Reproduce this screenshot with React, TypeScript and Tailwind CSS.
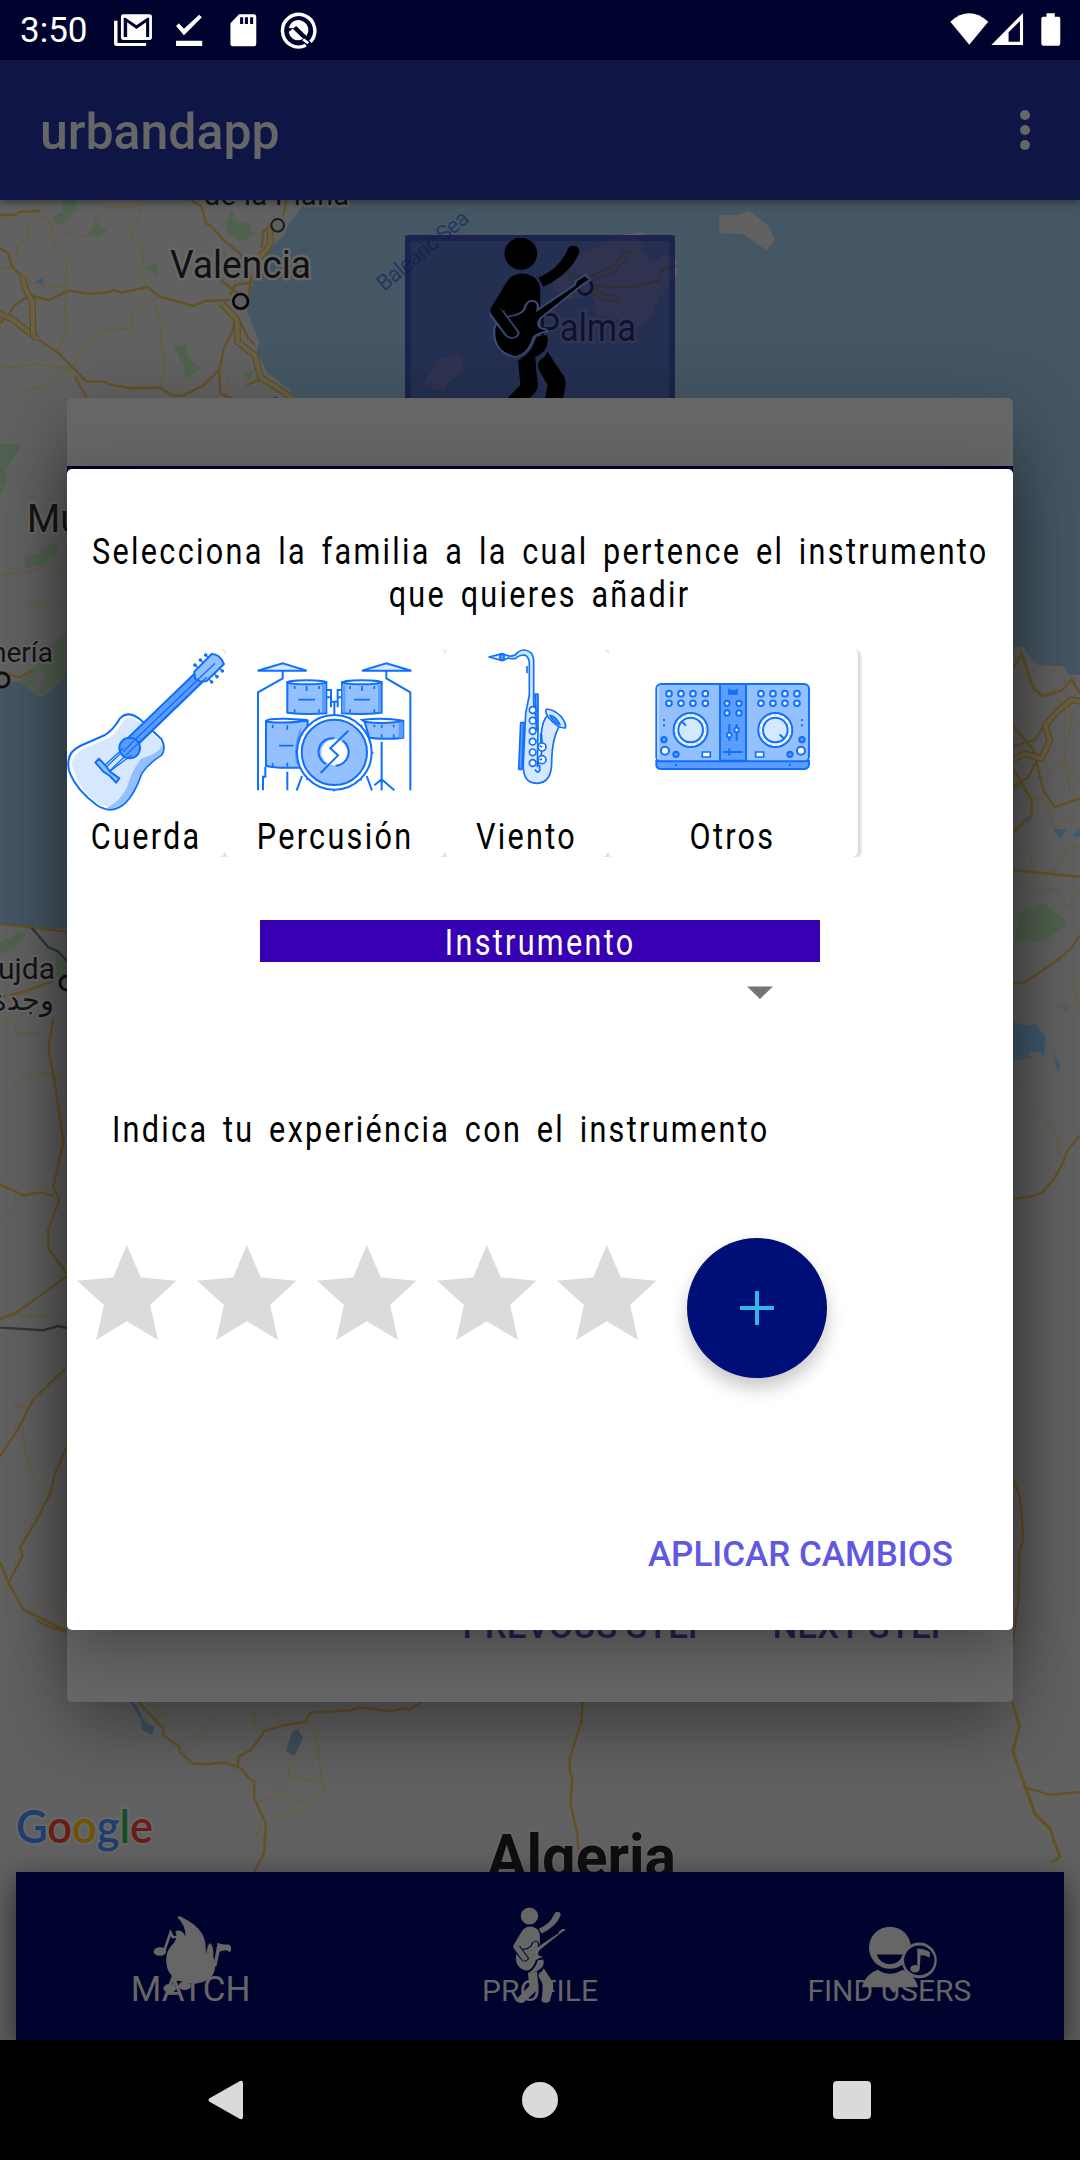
import React from "react";

const BLUE = "#0f6fff";
const PALE = "#d6e8ff";
const LIGHT = "#94c0ff";
const MID = "#5c9dff";

function Guitarist({ gap }: { gap: string }) {
  return (
    <g transform="scale(.4529 .3333)">
      <ellipse cx="333" cy="176" rx="36" ry="48" />
      <path d="M372 248 L383 275 Q445 235 462 172 Q463 154 450 152 Q439 152 436 165 Q418 222 372 248Z" />
      <path d="M327 495 L365 487 Q366 530 371 570 Q370 590 355 605 L312 660 Q290 675 275 650 L332 570Z" />
      <path d="M392 470 L430 548 Q434 570 428 600 L417 655 Q400 675 382 652 L392 570 L371 518 Q369 495 385 487Z" />
      <path d="M310 247 Q335 225 360 245 Q376 258 376 290 V350 L350 385 L300 370 L297 345 L275 380 Q262 360 267 340 L300 265Z" />
      <path d="M368 425 Q355 480 330 492 Q375 495 390 455 Q395 435 390 420Z" />
      <path
        d="M275 395 Q268 470 320 486 Q350 480 362 425 Q375 412 390 410 Q392 402 378 400 Q365 388 378 368 L470 268 L486 255 L476 240 L455 258 L452 270 L370 345 Q374 320 358 317 Q345 318 340 345 Q330 360 310 363 Q285 375 275 395Z"
        stroke={gap}
        strokeWidth="5"
      />
      <path d="M281 358 L313 414" stroke={gap} strokeWidth="34" strokeLinecap="round" />
      <path d="M279 352 L313 414" stroke="currentColor" strokeWidth="25" strokeLinecap="round" />
    </g>
  );
}

const minor = { fill: "none", stroke: "#6b5b2f", strokeWidth: 1, vectorEffect: "non-scaling-stroke" as const };
const road = { fill: "none", stroke: "#655224", strokeWidth: 2.4, vectorEffect: "non-scaling-stroke" as const };
const casing = { fill: "none", stroke: "#5d4b1e", strokeWidth: 6.5, vectorEffect: "non-scaling-stroke" as const };
const core = { fill: "none", stroke: "#696042", strokeWidth: 4.5, vectorEffect: "non-scaling-stroke" as const };

function Map() {
  const motorways = [
    "M-5 355 L40 375 L95 418 L112 432",
    "M68 245 L75 280 L97 320 L100 425",
    "M665 325 L712 375 L713 440 L765 482 L782 548 L850 590 L875 612",
    "M775 190 L800 165 L812 140 L808 100",
  ];
  const easternMotorways = ["M0 392 L75 380 L125 385 L150 365 L135 350 L170 335 L215 322 L245 324"];
  return (
    <svg viewBox="0 200 1080 1672" className="block h-[1672px] w-[1080px]" fontFamily="Roboto, sans-serif">
      <rect y="200" width="1080" height="1672" fill="#616161" />
      <g transform="translate(0 195) scale(.3333)">
        <path d="M905 10 L905 40 L870 80 L850 125 L810 160 L770 240 L745 300 L742 350 L778 440 L770 470 L800 530 L870 585 L905 640 H3300 V10Z" fill="#455764" />
        <g fill="#51614f">
          <path d="M190 15 H228 L232 45 L190 85 L172 88 L158 68 L185 50Z" />
          <path d="M288 78 L320 108 L298 125 L265 117Z" />
          <path d="M695 45 L710 82 L756 83 L750 105 L772 118 L718 140 L680 110 L678 85Z" />
          <path d="M437 215 L473 205 L470 242Z" />
          <path d="M520 453 L557 447 L567 487 L601 520 L557 555 L552 510Z" />
          <path d="M723 540 L763 525 L745 558Z" />
          <path d="M668 160 L680 178 L672 190Z" />
        </g>
        <path d="M105 262 L125 249 L134 273Z" fill="#40596c" />
        <path {...minor} d="M95 20 L120 65 L150 75 L165 110 L220 115 L240 125 L270 118 L290 60 L320 38 L400 35 L430 30 L420 15 M120 68 L85 90 L88 130 L50 150 L48 200 L30 225 M150 75 L165 150 L200 205 L198 295 M425 42 L390 125 L420 150 L432 190 L420 240 L445 278 M0 222 L35 220 M75 250 L115 277 L200 277 M470 310 L395 350 L398 400 L325 403 L262 435 L218 515 M198 295 L195 350 L200 405 L172 470 M0 510 L30 518 L110 507 L218 523 M218 523 L125 575 L95 580 L30 610 M468 325 L480 380 L484 460 L493 490 L490 530 L478 575 M655 520 L680 545 L685 575 L665 600" />
        <path {...road} d="M0 60 L45 60 L60 50 L122 48 M0 160 L25 175 L35 215 L68 245 M0 385 L25 360 L45 330 L88 302 L145 315 L205 287 L275 297 L330 290 L340 285 L365 292 L443 277 L480 305 L580 333 L615 318 L690 315 M112 432 L170 470 L225 525 L260 560 L312 560 L330 568 L392 580 L480 578 L515 600 L548 602 L612 570 L658 525 L672 460 L697 410 L705 375 M225 545 L262 612 M570 12 L605 35 L618 85 L635 95 L665 130 L720 175 L757 260 L735 265 L705 270 L690 300 M655 250 L720 300 M752 240 L748 300 M785 160 L790 110 L812 90 M658 530 L660 595 L695 610 M850 60 L860 15 M720 380 L745 430 L765 450 M740 570 L785 550" />
        {motorways.map((d) => (
          <React.Fragment key={d}>
            <path {...casing} d={d} />
            <path {...core} d={d} />
          </React.Fragment>
        ))}
        <circle cx="833" cy="91" r="19" fill="#5f5f5f" stroke="#1b1b1b" strokeWidth="6" />
        <circle cx="722" cy="319" r="22" fill="#5f5f5f" stroke="#050505" strokeWidth="8" />
        <path d="M822 608 L830 605 L830 612Z" fill="#222" />
      </g>
      <g stroke="#686868" strokeWidth="5" paintOrder="stroke" strokeLinejoin="round" fill="#111">
        <text x="204" y="205" fontSize="28.5" textLength="145" stroke="#5d6163">de la Plana</text>
        <text x="170" y="278" fontSize="39" textLength="141" lengthAdjust="spacingAndGlyphs">Valencia</text>
      </g>
      <text transform="translate(384 292) rotate(-39.5)" fontSize="22" textLength="112" fill="#25375f">Balearic Sea</text>
      <g transform="translate(370 195) scale(.4529 .3333)">
        <path fill="#616161" d="M771 60 H814 L838 48 L880 92 L894 135 L875 165 L823 117 L771 115Z" />
        <path fill="#616161" d="M445 195 L555 120 L608 111 L592 130 L605 155 L597 162 L622 203 L652 178 L677 195 V237 L657 280 L640 305 L620 365 L590 405 L545 368 L500 360 L495 300 L440 315 L410 290 L400 255Z" />
        <path fill="#616161" d="M150 493 L195 477 L205 483 V530 L175 560 L162 592 L117 570Z" />
        <path fill="#51614f" d="M430 220 L470 245 L440 260Z" />
        <path {...road} d="M493 273 L580 277 L602 270 L637 257 L640 235 L655 218 L678 213" />
        <path {...casing} d="M490 250 L540 220 L568 175 M495 290 L515 305 L545 312" strokeLinecap="round" />
        <path {...core} d="M490 250 L540 220 L568 175 M495 290 L515 305 L545 312" strokeLinecap="round" />
      </g>
      <ellipse cx="585" cy="287" rx="7" ry="7.5" fill="none" stroke="#111" strokeWidth="3" />
      <text x="538" y="341" fontSize="38" textLength="98" lengthAdjust="spacingAndGlyphs" stroke="#686868" strokeWidth="5" paintOrder="stroke" fill="#111">Palma</text>
      <rect x="405" y="235" width="270" height="190" rx="5" fill="#0f1444" fillOpacity=".6" />
      <path d="M408 425 V238 H672 V425" fill="none" stroke="#141a4c" strokeOpacity=".5" strokeWidth="6" />
      <g transform="translate(370 195)" color="#000" fill="#000">
        <Guitarist gap="#3a4a72" />
      </g>

      <g transform="translate(0 400) scale(.3333 .8418)">
        <path fill="#455764" d="M0 337 L75 333 L120 354 L160 343 L205 322 V628 L130 628 L0 624Z" />
        <g fill="#51614f">
          <path d="M0 52 L68 53 L15 85 L22 95 L0 112Z" />
          <path d="M75 187 L120 182 L120 176 L170 169 L172 182 L140 187 L138 196 L78 199Z" />
          <path d="M60 335 L100 320 L130 298 L205 275 V322 L165 340 L118 353Z" />
          <path d="M0 645 L60 632 L78 635 L40 652 L0 658Z" />
          <path d="M165 655 L205 662 V685 H170Z" />
        </g>
        <path d="M95 325 L130 318 L137 330 L112 347Z" fill="#5e5e5e" />
        <path {...minor} d="M0 207 L80 205 L135 198 L205 204 M205 232 L180 240 L205 262 M85 243 L120 244 L158 247 M0 735 L45 742 L55 752 L120 752 M0 826 L100 798 L205 803 M0 978 L60 950 M0 1090 L60 1087 L205 1090 M25 1198 L80 1195 M68 1222 L75 1250 L110 1285 L150 1298 L170 1310 M95 1440 L115 1423 L150 1432 L205 1450" />
        <path {...road} d="M0 622 L60 625 L205 632 M0 710 L80 702 L160 690 M0 323 L60 330 L100 320 M0 932 L72 945 L120 941 L160 945 M160 735 L145 770 L168 820 L190 882 L160 935 L178 950 L145 985 L145 1008 L200 1038 M0 1092 L50 1084 L205 1040 M0 1255 L55 1222 L70 1210 L100 1187 L205 1147 M205 1240 L165 1275 L150 1300 L110 1330 L60 1363 L68 1373 L25 1405 M0 1380 L25 1405 L70 1437 L205 1463" />
        <path d="M95 627 L145 650 L175 655 L205 668 M0 1102 L130 1105 L175 1100 L205 1103" fill="none" stroke="#33383a" strokeWidth="2.4" vectorEffect="non-scaling-stroke" />
      </g>
      <circle cx="2" cy="680" r="7" fill="#5f5f5f" stroke="#111" strokeWidth="3" />
      <circle cx="67" cy="983" r="7" fill="#5f5f5f" stroke="#111" strokeWidth="3" />
      <g stroke="#686868" strokeWidth="4" paintOrder="stroke" fill="#151515">
        <text x="27" y="532" fontSize="38">Mur</text>
        <text x="53" y="662" textAnchor="end" fontSize="28">Almería</text>
        <text x="55" y="979" textAnchor="end" fontSize="30">Oujda</text>
        <text x="54" y="1010" fontSize="29" direction="rtl" fontFamily="DejaVu Sans">وجدة</text>
      </g>

      <g transform="translate(1000 400) scale(.3333 .9311)">
        <path fill="#455764" d="M30 0 H245 V295 L205 295 L190 286 L115 285 L95 278 L70 265 H30Z" />
        <path fill="#405a6e" d="M75 448 L100 447 L85 455Z M160 461 L200 461 L180 471Z M215 468 L240 460 V470Z M38 667 L75 672 L105 670 L138 684 L130 707 L120 700 L82 700 L95 706 L38 710Z M157 702 L180 712 L177 725Z" />
        <path fill="#51614f" d="M45 580 L60 550 L130 540 L205 562 L130 582Z M175 652 L212 650 L200 657Z M38 412 H80 L70 418 L38 419Z" />
        <path {...minor} d="M38 300 L80 292 L120 320 L160 310 L200 340 L240 345 M38 330 L85 345 L110 330 M38 445 L75 430 L130 428 L165 460 L200 448 L240 455 M38 480 L90 488 L105 510 L165 505 L210 480 L240 478 M38 520 L120 530 L170 525 L205 545 L240 525 M140 400 L195 390 L240 405 M195 300 L215 340 L195 380 L210 420 L240 430 M38 727 L80 745 L120 770 L165 785 L185 815 M215 620 L240 655" />
        <path {...road} d="M38 290 L65 272 L85 295 L100 310 L130 318 L185 312 L215 300 L240 315 M38 350 L100 375 L130 420 L165 437 L240 428 M38 372 L105 365 L140 345 M38 415 L85 405 L120 380 M38 465 L95 445 L95 430 L38 395 M38 505 L240 512 M38 627 L75 625 L120 615 L185 598 L215 588 L240 575 M38 858 L85 856 L125 852 L165 835 L185 822 L205 805 L240 790 M38 1158 L60 1178 L70 1222 L57 1240 L55 1290 L38 1335 M38 1400 L58 1425 L38 1450 L75 1490 L105 1520 L150 1535 L180 1565 M75 1490 L150 1498 L240 1495" />
        {easternMotorways.map((d) => (
          <React.Fragment key={d}>
            <path {...casing} d={d} />
            <path {...core} d={d} />
          </React.Fragment>
        ))}
      </g>

      <g transform="translate(0 1620) scale(.6888 .3333)">
        <path fill="#3d505c" d="M187 240 L198 255 L210 305 L224 320 L221 345 L206 328 L205 300Z M424 335 L433 328 L440 355 L427 408 L415 393Z" />
        <path {...minor} d="M328 246 L300 325 L290 335 L284 365 L267 400 M215 250 L230 255 L228 275 L240 285 L235 295 M373 246 L368 320 L382 333 M405 246 L402 310 M468 246 L455 262 M445 306 L458 332 L468 487 L471 508 L435 575 L398 595 L383 655 M396 502 L420 525 L442 550 M405 520 L375 548 M430 410 L428 430 L418 450 L420 468 L468 487 M370 605 L378 615 L373 645 L383 658" />
        <path {...road} d="M198 240 L237 325 L237 345 L260 380 L262 398 L280 430 L300 433 L325 427 L348 443 L362 475 L369 485 L369 535 L386 610 L383 700 L369 757 M345 440 L346 410 L364 390 L385 332 L410 317 L443 306 L451 278 L508 271 L523 262 L568 274 L583 266 L596 269 L613 242 M846 246 L844 305 L827 415 L827 450 L831 480 L828 550 L838 640 L840 690 M52 0 L68 18 L98 36 M1470 246 L1480 315 L1471 400 L1489 500 L1503 580 L1525 625 L1530 665 L1539 710 L1527 727" />
      </g>
      <text x="487" y="1878" fontSize="62" fontWeight="700" textLength="189" lengthAdjust="spacingAndGlyphs" fill="#0e0e0e" stroke="#666" strokeWidth="3" paintOrder="stroke">Algeria</text>
      <text x="16" y="1843" fontFamily="Lato, sans-serif" fontSize="46" fontWeight="600" textLength="137" lengthAdjust="spacingAndGlyphs" stroke="#686868" strokeWidth="4" paintOrder="stroke">
        <tspan fill="#1e3d70">G</tspan>
        <tspan fill="#6b1c17">o</tspan>
        <tspan fill="#715305">o</tspan>
        <tspan fill="#1e3d70">g</tspan>
        <tspan fill="#154d25">l</tspan>
        <tspan fill="#6b1c17">e</tspan>
      </text>
    </svg>
  );
}

function StatusBar() {
  return (
    <div className="flex h-[60px] items-center bg-[#00032d] text-white">
      <span className="ml-[20px] w-[92px] text-[35px] leading-none">3:50</span>
      <svg viewBox="325 30 600 120" preserveAspectRatio="none" className="h-[40px] w-[206.6px]" fill="#fff">
        <path d="M331 62 H341 V129 H424 V138 H338 Q331 138 331 130Z" />
        <path fillRule="evenodd" d="M358 43 H434 Q441 43 441 51 V112 Q441 120 434 120 H358 Q351 120 351 112 V51 Q351 43 358 43Z M359 53 V111 H369 V67 L396 87 L424 67 V111 H433 V53 H428 L396 76 L364 53Z" />
        <path d="M511 78 L519 70 L534 86 L578 44 L586 52 L534 106Z M511 122 H587 V138 H511Z" />
        <path fillRule="evenodd" d="M694 43 H737 Q744 43 744 51 V132 Q744 139 737 139 H676 Q669 139 669 132 V70Z M697 52 V72 H706 V52Z M711 52 V72 H720 V52Z M726 52 V72 H735 V52Z" />
        <path d="M901 126 A47 49 0 1 0 888 136" fill="none" stroke="#fff" strokeWidth="10" />
        <path d="M838 84 A29 30 0 0 1 895 95 L890 108 L860 78 L852 85Z M838 96 L850 86 L880 116 Q865 125 850 116 Q840 108 838 96Z" />
        <path d="M862 92 L906 134" stroke="#00032d" strokeWidth="5" />
        <path d="M880 118 L895 130" stroke="#fff" strokeWidth="8" />
      </svg>
      <svg viewBox="1190 30 325 120" preserveAspectRatio="none" className="ml-auto mr-[18px] h-[40px] w-[112px]" fill="#fff">
        <path d="M1191 65 Q1245 15 1301 65 L1246 134Z" />
        <path fillRule="evenodd" d="M1310 135 L1402 39 V135Z M1360 97 V125 H1393 V63Z" />
        <path d="M1470 40 H1494 V50 H1505 Q1510 50 1510 56 V130 Q1510 137 1505 137 H1460 Q1455 137 1455 130 V56 Q1455 50 1460 50 H1470Z" />
      </svg>
    </div>
  );
}

function FlameIcon() {
  return (
    <svg viewBox="385 165 205 235" preserveAspectRatio="none" className="absolute left-[136px] top-[43px] h-[78px] w-[81px]" fill="#666">
      <path d="M449 172 Q455 165 465 175 Q515 205 520 250 L522 285 Q525 250 533 250 Q542 260 540 290 Q560 360 495 372 Q440 370 425 330 Q412 280 440 250 L448 232 L444 214 Q460 206 470 230 Q470 195 449 172Z" />
      <ellipse cx="405" cy="275" rx="16" ry="13" />
      <path d="M416 272 L432 218 L438 232 L456 230" fill="none" stroke="#666" strokeWidth="7" />
      <path d="M540 320 L551 248 Q560 255 580 254 Q590 265 582 278 Q575 266 556 276 L548 320Z" />
      <ellipse cx="430" cy="386" rx="16" ry="13" />
      <ellipse cx="468" cy="378" rx="16" ry="13" />
      <path d="M440 384 V360 H475 V378" fill="none" stroke="#666" strokeWidth="6" />
    </svg>
  );
}

function FindIcon() {
  return (
    <svg viewBox="720 1010 230 165" preserveAspectRatio="none" className="absolute left-[146px] top-[53px] h-[69.5px] w-[76.6px]" fill="#666">
      <ellipse cx="807" cy="1064" rx="63" ry="50" />
      <path d="M767 1080 H846 Q835 1102 807 1103 Q778 1102 767 1080Z" fill="#00032d" />
      <path d="M722 1158 Q735 1125 770 1116 Q807 1135 845 1116 Q880 1125 892 1158 H832 L818 1172 L804 1158Z" />
      <ellipse cx="895" cy="1094" rx="49" ry="39" fill="#00032d" stroke="#666" strokeWidth="7" />
      <ellipse cx="882" cy="1114" rx="14" ry="9" />
      <path d="M889 1066 Q915 1068 928 1075 L925 1088 Q915 1080 899 1082 L896 1115 H889Z" />
    </svg>
  );
}

function BottomBar() {
  return (
    <div className="mx-4 grid h-[168px] grid-cols-3 bg-[#00032d] text-[30px] leading-none text-[#666] shadow-[0_10px_30px_rgba(0,0,0,0.6)]">
      <div className="relative flex justify-center pt-[100px]">
        <FlameIcon />
        <span className="text-[35px]">MATCH</span>
      </div>
      <div className="relative flex justify-center pt-[104px]">
        <svg viewBox="490 235 110 185" className="absolute left-[148px] top-[34px] h-[98.8px] w-[58.7px]" fill="#666" color="#666">
          <g transform="translate(370 195)">
            <Guitarist gap="#00032d" />
          </g>
        </svg>
        <span>PROFILE</span>
      </div>
      <div className="relative flex justify-center pt-[104px]">
        <FindIcon />
        <span>FIND USERS</span>
      </div>
    </div>
  );
}

function NavBar() {
  return (
    <div className="flex h-[120px] items-center bg-black">
      <svg viewBox="0 0 36 40" className="ml-[208px] h-[40px] w-[36px]" fill="#dadada">
        <path d="M32 1 Q35 0 35 3 V37 Q35 40 32 39 L2 22 Q-1 20 2 18Z" />
      </svg>
      <div className="ml-[278px] size-[36px] rounded-full bg-[#dadada]" />
      <div className="ml-[275px] size-[38px] rounded-[4px] bg-[#dadada]" />
    </div>
  );
}

function GuitarIcon() {
  const pegs = [[437, 465], [421, 480], [405, 495], [487, 513], [471, 530], [455, 546]];
  return (
    <svg viewBox="21 447 474 495" className="h-[165px] w-[158px] shrink-0" stroke={BLUE} strokeWidth="6" strokeLinejoin="round">
      <path fill="#fff" d="M26 780 Q28 755 60 738 L135 705 Q160 690 180 655 Q205 630 240 658 L305 718 Q318 745 305 765 Q265 790 245 820 Q225 880 195 910 Q155 945 110 915 Q50 870 30 820 Q22 800 26 780Z" />
      <path stroke="none" fill={PALE} d="M35 790 Q40 760 80 742 L150 712 Q175 690 190 662 Q210 640 240 668 L300 722 Q310 745 300 760 Q260 785 240 815 Q220 870 190 895 Q150 935 112 908 Q50 865 35 790Z" />
      <path stroke="none" fill={LIGHT} d="M306 735 Q312 755 303 763 Q262 790 243 820 Q222 880 193 906 Q165 930 140 924 Q180 905 200 865 Q215 810 245 775 Q300 760 306 735Z" />
      <path fill={MID} d="M200 718 L405 520 L428 545 L222 745Z" />
      <path fill={LIGHT} d="M405 535 L403 515 L455 462 Q480 462 492 492 L440 543 L422 545Z" />
      <path d="M140 800 L465 490 M150 812 L440 532" fill="none" strokeWidth="4" />
      <circle cx="209" cy="744" r="31" fill={MID} />
      <path d="M190 755 L222 722 M198 765 L232 732 M135 795 L190 745 M148 815 L215 765" fill="none" strokeWidth="4" />
      <path fill={LIGHT} d="M106 787 L117 776 L135 795 L150 815 L178 835 L168 848 L150 828 L130 815Z" />
      {pegs.map(([x, y]) => (
        <circle key={x} cx={x} cy={y} r="4" fill={BLUE} strokeWidth="3" />
      ))}
      <path d="M437 465 L447 475 M421 480 L431 490 M405 495 L415 505 M478 503 L487 513 M462 520 L471 530 M446 536 L455 546" strokeWidth="4" />
    </svg>
  );
}

function DrumsIcon() {
  return (
    <svg viewBox="590 447 468 495" className="-ml-[2px] h-[165px] w-[156px] shrink-0" stroke={BLUE} strokeWidth="6" fill="none">
      <path fill={PALE} d="M595 512 L670 490 L742 512Z M908 512 L981 490 L1056 512Z" />
      <path d="M670 512 V535 L596 577 V871 M981 512 V535 L1053 577 V871 M611 871 V830 H618 V800 M684 815 V871 M728 828 L712 871 M922 828 L938 871 M967 725 V871 M945 856 L967 838 L1005 871" />
      <path fill={LIGHT} d="M620 663 H745 V803 H700 Q650 805 620 797Z M915 663 H1032 V713 Q980 720 930 713Z" />
      <path stroke="none" fill={MID} d="M1018 665 H1032 V713 H1018Z M725 680 Q700 730 710 790 L722 800 Z" />
      <path fill="#fff" d="M620 665 Q620 655 680 656 L745 660 Q700 672 620 665Z M908 660 Q970 652 1032 662 Q980 675 915 665Z" />
      <path fill={LIGHT} d="M684 547 H801 V640 Q740 645 684 638Z M848 547 H967 V638 Q910 645 848 640Z" />
      <path stroke="none" fill={MID} d="M788 555 H799 V637 H788Z M848 555 H858 V637 H848Z M956 555 H965 V637 H956Z" />
      <ellipse cx="742" cy="547" rx="59" ry="6" fill="#fff" />
      <ellipse cx="908" cy="547" rx="59" ry="6" fill="#fff" />
      <path strokeWidth="5" d="M717 599 H767 M884 599 H932 M742 558 V573 M908 558 V573 M706 558 V567 M779 558 V567 M872 558 V567 M945 558 V567 M706 628 V638 M779 628 V638 M872 628 V638 M945 628 V638 M659 737 H702 M684 676 V690 M640 674 V684 M640 788 V800 M684 788 V800 M967 674 V684 M945 674 V682 M1003 674 V682 M967 703 V713 M1003 703 V713" />
      <path d="M803 570 H815 V622 M803 592 H815 M848 570 H835 V622 M848 592 H835 M815 605 H835 M825 605 V645" />
      <circle cx="825" cy="757" r="112" fill="#fff" />
      <circle cx="825" cy="757" r="98" fill={LIGHT} />
      <circle cx="825" cy="757" r="39" fill="#fff" stroke="none" />
      <path d="M825 715 A41 41 0 0 0 800 792 M829 797 A41 41 0 0 0 850 722" />
      <path d="M867 692 L813 745 L836 766 L784 819" />
      <circle cx="825" cy="757" r="115" strokeWidth="5" strokeDasharray="4 86" />
    </svg>
  );
}

function SaxIcon() {
  const keys = [630, 662, 693, 725, 757, 789];
  return (
    <svg viewBox="1282 447 234 495" className="h-[165px] w-[78px] shrink-0 overflow-visible" stroke={BLUE} strokeWidth="5" fill={PALE} strokeLinejoin="round">
      <path d="M1285 471 L1325 461 L1345 468 Q1362 470 1370 458 Q1390 442 1410 458 Q1420 468 1419 490 V610 L1432 690 L1430 800 Q1450 760 1442 700 Q1445 660 1462 645 L1495 680 Q1475 715 1473 780 Q1475 850 1428 850 Q1385 850 1388 790 L1395 640 L1406 585 V490 Q1405 470 1392 465 Q1375 465 1365 475 Q1350 478 1343 474 L1325 482Z" />
      <path fill={MID} d="M1318 463 H1330 V480 H1318Z M1380 668 H1390 L1384 808 H1374Z M1423 582 H1432 V690 H1427Z" />
      <path d="M1457 628 Q1475 625 1500 648 Q1518 670 1514 684 Q1490 685 1462 650 Q1452 635 1457 628Z" />
      <path fill={MID} d="M1468 646 Q1485 648 1498 674 Q1480 668 1468 646Z" />
      <path fill="none" d="M1440 700 V730 M1437 795 V812 Q1430 822 1423 808 M1399 498 V520" />
      {keys.map((y) => (
        <circle key={y} cx="1416" cy={y} r="10" fill="#fff" />
      ))}
      <circle cx="1444" cy="741" r="12" fill="#fff" />
      <circle cx="1444" cy="779" r="12" fill="#fff" />
      <path d="M1437 737 L1444 742 M1437 780 L1444 776" />
    </svg>
  );
}

function MixerIcon() {
  const padRows = [581, 610];
  const padCols = [387, 423, 459, 496, 663, 699, 735, 771];
  return (
    <svg viewBox="345 447 466 495" className="h-[165px] w-[155.3px] shrink-0" stroke={BLUE} strokeWidth="6" fill={LIGHT}>
      <path fill={MID} d="M349 783 H807 V796 Q804 807 793 807 H364 Q350 806 349 796Z" />
      <rect x="349" y="552" width="458" height="232" rx="14" />
      <path d="M354 560 V778" stroke={PALE} strokeWidth="4" />
      <path fill={MID} d="M540 552 H618 V782 H540Z" />
      <path stroke="none" fill={BLUE} d="M564 565 L572 570 H586 L593 565 V584 H564Z" />
      {padRows.map((y) => padCols.map((x) => <circle key={`${x}-${y}`} cx={x} cy={y} r="8.5" fill="#fff" />))}
      {[610, 639].map((y) => [561, 597].map((x) => <circle key={`${x}-${y}`} cx={x} cy={y} r="8" fill={PALE} />))}
      {[452, 706].map((x) => (
        <g key={x}>
          <circle cx={x} cy="690" r="51" fill="#fff" />
          <circle cx={x} cy="690" r="45" stroke={LIGHT} strokeWidth="3" strokeDasharray="6 10" fill="none" />
          <circle cx={x} cy="690" r="37" fill={PALE} />
        </g>
      ))}
      <path d="M427 666 L438 677 M719 703 L731 715 M568 672 V722 M590 672 V722 M550 756 H608 M568 745 V767" />
      <circle cx="568" cy="705" r="7" fill={PALE} strokeWidth="5" />
      <circle cx="590" cy="690" r="7" fill={PALE} strokeWidth="5" />
      {[[372, 719], [408, 763], [750, 763], [786, 719]].map(([x, y]) => (
        <circle key={x} cx={x} cy={y} r="8" fill={MID} />
      ))}
      <circle cx="375" cy="752" r="12" fill="#fff" />
      <circle cx="783" cy="752" r="12" fill="#fff" />
      <path fill="#fff" strokeWidth="5" d="M487 756 H511 V771 H487Z M647 756 H671 V771 H647Z" />
      <path d="M372 657 V663 M372 673 V679 M786 657 V663 M786 673 V679 M408 792 V798 M750 792 V798" />
    </svg>
  );
}

const label = "inline-block translate-y-[2px] whitespace-nowrap text-[36px] leading-[43px] tracking-[2.7px] [word-spacing:5.6px] scale-x-[0.85]";

function Family({ name, width, children }: { name: string; width: string; children: React.ReactNode }) {
  return (
    <div className={`${width} flex h-[208px] shrink-0 flex-col items-center rounded-[6px] bg-white shadow-[3px_1px_3px_rgba(0,0,0,0.16)]`}>
      {children}
      <span className={label}>{name}</span>
    </div>
  );
}

export default function App() {
  return (
    <main className="relative h-[2160px] w-[1080px] overflow-hidden bg-[#616161] font-['Roboto',sans-serif] text-black">
      <div className="flex flex-col">
        <StatusBar />
        <header className="relative z-10 flex h-[140px] items-center justify-between bg-[#0f1544] pl-[40px] pr-[50px] text-[#666] shadow-[0_2px_8px_rgba(0,0,0,0.45)]">
          <h1 className="pt-[3px] text-[50px] font-medium leading-none">urbandapp</h1>
          <div className="flex flex-col gap-[5px]">
            <i className="size-[10px] rounded-full bg-[#666]" />
            <i className="size-[10px] rounded-full bg-[#666]" />
            <i className="size-[10px] rounded-full bg-[#666]" />
          </div>
        </header>
        <Map />
        <BottomBar />
        <div className="relative z-10">
          <NavBar />
        </div>
      </div>

      <section className="absolute left-[67px] top-[398px] z-20 flex h-[1304px] w-[946px] flex-col rounded-[5px] bg-[#666] shadow-[0_24px_70px_rgba(0,0,0,0.38)]">
        <div className="mt-[68px] h-[60px] bg-[#00032d]" />
        <div className="mt-auto flex justify-end gap-[62px] pb-[54px] pr-[60px] text-[35px] font-medium leading-[42px] text-[#221f50]">
          <span>PREVOUS STEP</span>
          <span>NEXT STEP</span>
        </div>
      </section>

      <section className="absolute left-[67px] top-[469px] z-30 flex h-[1161px] w-[946px] flex-col rounded-[5px] bg-white shadow-[0_16px_60px_rgba(0,0,0,0.32)]">
        <div className="mt-[60px] flex h-[86px] flex-col items-center">
          <span className={label}>Selecciona la familia a la cual pertence el instrumento</span>
          <span className={label}>que quieres añadir</span>
        </div>
        <div className="mt-[34px] flex h-[208px] overflow-hidden">
          <Family name="Cuerda" width="w-[158px]"><GuitarIcon /></Family>
          <Family name="Percusión" width="w-[220px]"><DrumsIcon /></Family>
          <Family name="Viento" width="w-[163px]"><SaxIcon /></Family>
          <Family name="Otros" width="w-[250px]"><MixerIcon /></Family>
        </div>
        <div className="ml-[193px] mt-[63px] flex h-[42px] w-[560px] items-center justify-center bg-[#3700b3] text-white">
          <span className={label}>Instrumento</span>
        </div>
        <svg viewBox="0 0 26 13" className="ml-[680px] mt-[24px] h-[13px] w-[26px]" fill="#757575">
          <path d="M0 0.5 H26 L13 13Z" />
        </svg>
        <div className="ml-[45px] mt-[108px] h-[43px]">
          <span className={`${label} origin-left`}>Indica tu experiéncia con el instrumento</span>
        </div>
        <div className="mt-[88px] flex h-[140px] items-start">
          <div className="ml-[10px] mt-[7px] flex gap-[20.5px]">
            {[1, 2, 3, 4, 5].map((n) => (
              <svg key={n} viewBox="28 1066 162 284" preserveAspectRatio="none" className="h-[95px] w-[99.5px]" fill="#dbdbdb">
                <path d="M109 1066 L132 1163 L190 1173 L147 1245 L160 1350 L109 1294 L59 1350 L72 1245 L28 1173 L87 1163Z" />
              </svg>
            ))}
          </div>
          <button className="ml-[30px] flex size-[140px] items-center justify-center rounded-full bg-[#000f78] shadow-[0_10px_18px_rgba(0,0,0,0.22)]">
            <svg viewBox="0 0 34 34" className="size-[34px]" stroke="#33b5e5" strokeWidth="4">
              <path d="M17 0 V34 M0 17 H34" />
            </svg>
          </button>
        </div>
        <div className="mt-auto flex justify-end pb-[54px] pr-[60px] text-[35px] font-medium leading-[42px] text-[#6058df]">
          <span>APLICAR CAMBIOS</span>
        </div>
      </section>
    </main>
  );
}
